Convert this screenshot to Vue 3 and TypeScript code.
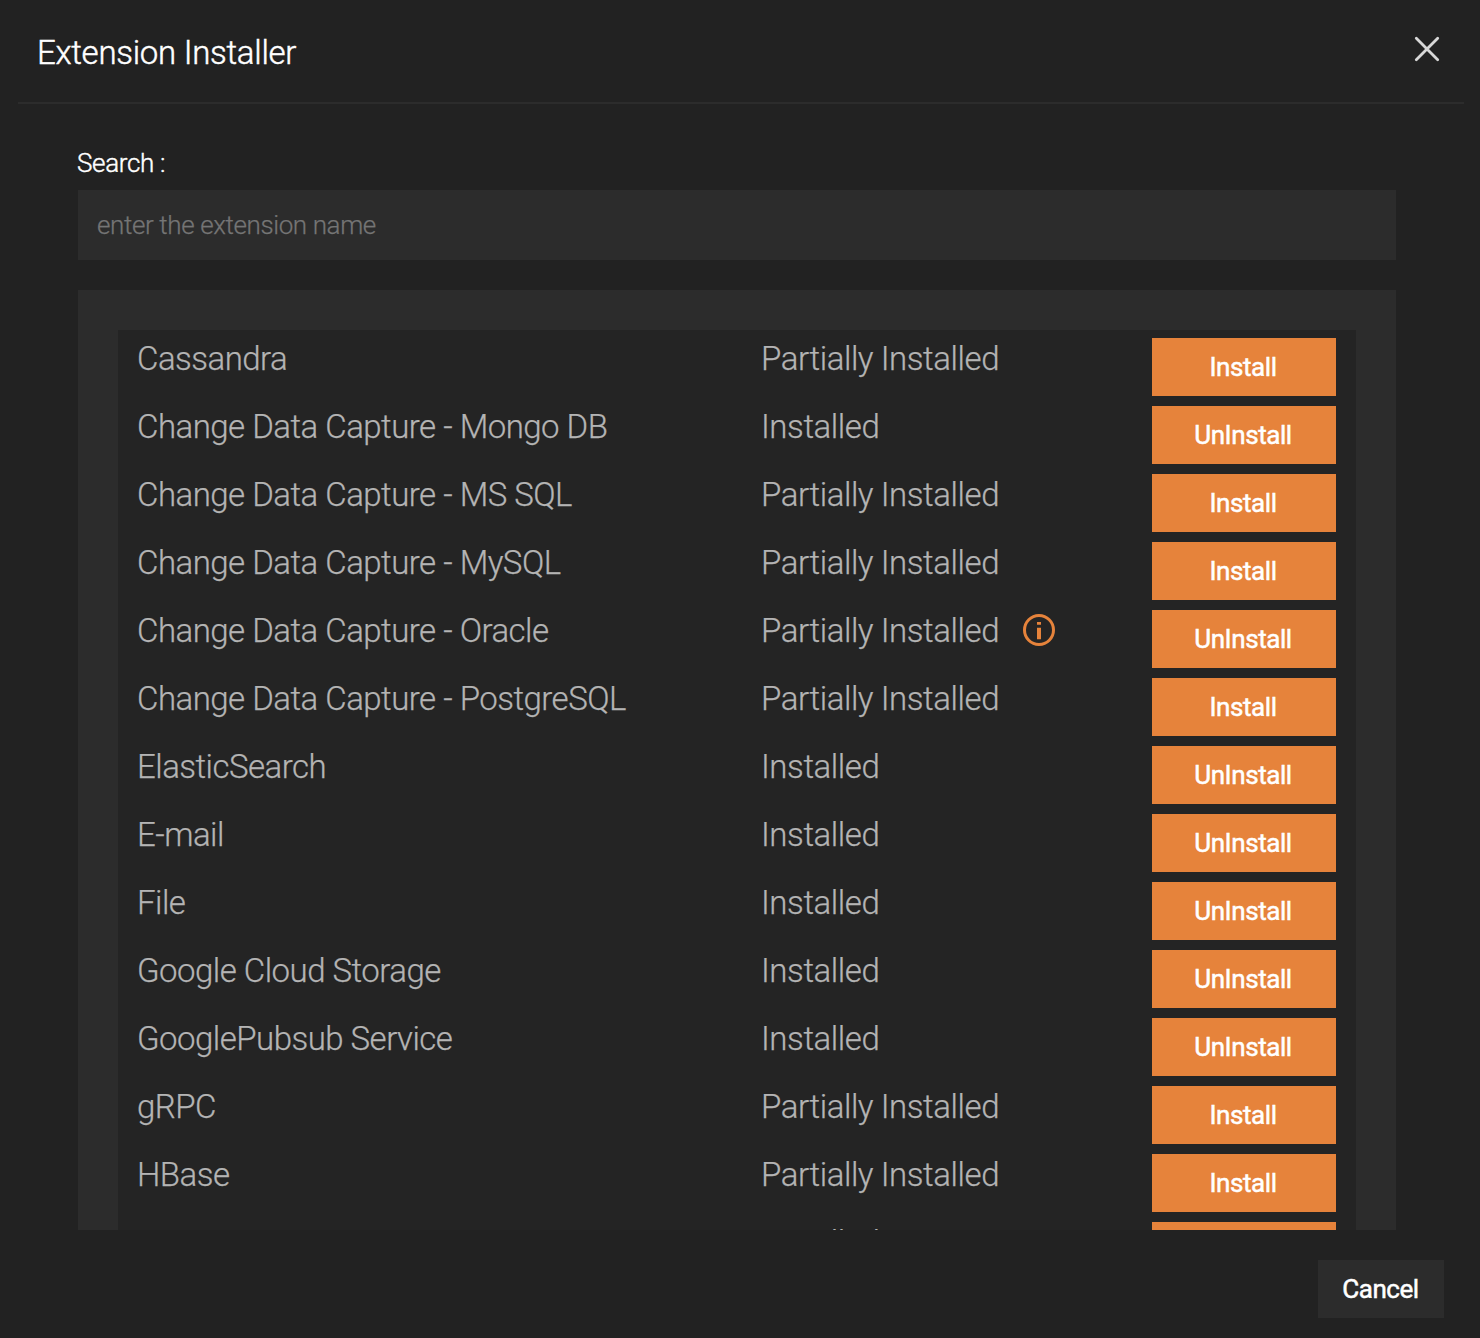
<script setup lang="ts">
interface Extension {
  name: string
  status: 'Installed' | 'Partially Installed'
  action: 'Install' | 'UnInstall'
  info?: boolean
}

const extensions: Extension[] = [
  { name: 'Cassandra', status: 'Partially Installed', action: 'Install' },
  { name: 'Change Data Capture - Mongo DB', status: 'Installed', action: 'UnInstall' },
  { name: 'Change Data Capture - MS SQL', status: 'Partially Installed', action: 'Install' },
  { name: 'Change Data Capture - MySQL', status: 'Partially Installed', action: 'Install' },
  { name: 'Change Data Capture - Oracle', status: 'Partially Installed', action: 'UnInstall', info: true },
  { name: 'Change Data Capture - PostgreSQL', status: 'Partially Installed', action: 'Install' },
  { name: 'ElasticSearch', status: 'Installed', action: 'UnInstall' },
  { name: 'E-mail', status: 'Installed', action: 'UnInstall' },
  { name: 'File', status: 'Installed', action: 'UnInstall' },
  { name: 'Google Cloud Storage', status: 'Installed', action: 'UnInstall' },
  { name: 'GooglePubsub Service', status: 'Installed', action: 'UnInstall' },
  { name: 'gRPC', status: 'Partially Installed', action: 'Install' },
  { name: 'HBase', status: 'Partially Installed', action: 'Install' },
  { name: '', status: 'Installed', action: 'UnInstall' },
]
</script>

<template>
  <div class="dialog">
    <header class="header">
      <h1 class="title">Extension Installer</h1>
      <button class="close" aria-label="Close">
        <svg width="26" height="26" viewBox="0 0 26 26">
          <path d="M2.3 2.3 23.7 23.7M23.7 2.3 2.3 23.7" fill="none" stroke="#d8d8d8" stroke-width="2.8" stroke-linecap="round" />
        </svg>
      </button>
    </header>
    <main class="body">
      <label class="label" for="search">Search :</label>
      <input id="search" class="search" type="text" placeholder="enter the extension name" />
      <div class="panel">
        <div class="list">
          <div v-for="(ext, i) in extensions" :key="i" class="row">
            <span class="name">{{ ext.name }}</span>
            <span class="status">
              <span>{{ ext.status }}</span>
              <svg v-if="ext.info" class="info" width="32" height="32" viewBox="0 0 32 32">
                <circle cx="16" cy="16" r="14.5" fill="none" stroke="#e6833b" stroke-width="3" />
                <path d="M14 8h4v2.8h-4zM14 13.8h4v11.4h-4z" fill="#e6833b" />
              </svg>
            </span>
            <button class="action">{{ ext.action }}</button>
          </div>
        </div>
      </div>
    </main>
    <footer class="footer">
      <button class="cancel">Cancel</button>
    </footer>
  </div>
</template>

<style>
body {
  margin: 0;
  background: #222222;
}
</style>

<style scoped>
.dialog {
  display: flex;
  flex-direction: column;
  width: 1480px;
  height: 1338px;
  box-sizing: border-box;
  overflow: hidden;
  background: #222222;
  color: #ffffff;
  font-family: Roboto, 'Liberation Sans', sans-serif;
  font-weight: 300;
}
button {
  border: 0;
  padding: 0;
  font-family: inherit;
}
.header {
  display: flex;
  justify-content: space-between;
  height: 102px;
  margin: 0 16px 0 18px;
  border-bottom: 2px solid #2c2c2c;
}
.title {
  margin: 33px 0 0 19px;
  font-size: 33px;
  line-height: 40px;
  font-weight: 300;
  letter-spacing: -0.28px;
  -webkit-text-stroke: 0.45px currentColor;
}
.close {
  width: 26px;
  height: 26px;
  margin: 36px 24px 0 0;
  background: none;
}
.close svg {
  display: block;
}
.body {
  display: flex;
  flex-direction: column;
  padding: 44px 84px 0 78px;
}
.label {
  height: 30px;
  margin: 0 0 12px -1px;
  font-size: 26px;
  line-height: 30px;
  letter-spacing: -0.35px;
  -webkit-text-stroke: 0.4px currentColor;
}
.search {
  height: 70px;
  box-sizing: border-box;
  padding: 0 19px;
  border: 0;
  border-radius: 0;
  outline: 0;
  background: #2c2c2c;
  color: #ffffff;
  font: 300 26px Roboto, 'Liberation Sans', sans-serif;
  letter-spacing: -0.39px;
}
.search::placeholder {
  color: #757575;
  -webkit-text-stroke: 0.25px #757575;
}
.panel {
  height: 940px;
  box-sizing: border-box;
  margin-top: 30px;
  padding: 40px 40px 0;
  overflow: hidden;
  background: #2c2c2c;
}
.list {
  height: 900px;
  overflow: hidden;
  background: #242424;
}
.row {
  display: grid;
  grid-template-columns: 624px 391px 184px;
  height: 68px;
  padding-left: 19px;
  color: #b4b4b4;
  font-size: 33px;
  line-height: 58px;
  letter-spacing: -0.52px;
}
.name,
.status {
  -webkit-text-stroke: 0.25px currentColor;
}
.status {
  display: flex;
  letter-spacing: -0.43px;
}
.info {
  margin: 12px 0 0 24px;
  -webkit-text-stroke: 0;
}
.action {
  height: 58px;
  margin-top: 8px;
  padding-right: 2px;
  background: #e6833b;
  color: #ffffff;
  font-size: 26px;
  font-weight: 400;
  letter-spacing: -0.43px;
  -webkit-text-stroke: 0.5px currentColor;
}
.footer {
  display: flex;
  justify-content: flex-end;
  padding: 30px 36px 0 0;
}
.cancel {
  width: 126px;
  height: 58px;
  padding-right: 1px;
  background: #2c2c2c;
  color: #ffffff;
  font-size: 26px;
  font-weight: 400;
  letter-spacing: -0.45px;
  -webkit-text-stroke: 0.5px currentColor;
}
</style>
